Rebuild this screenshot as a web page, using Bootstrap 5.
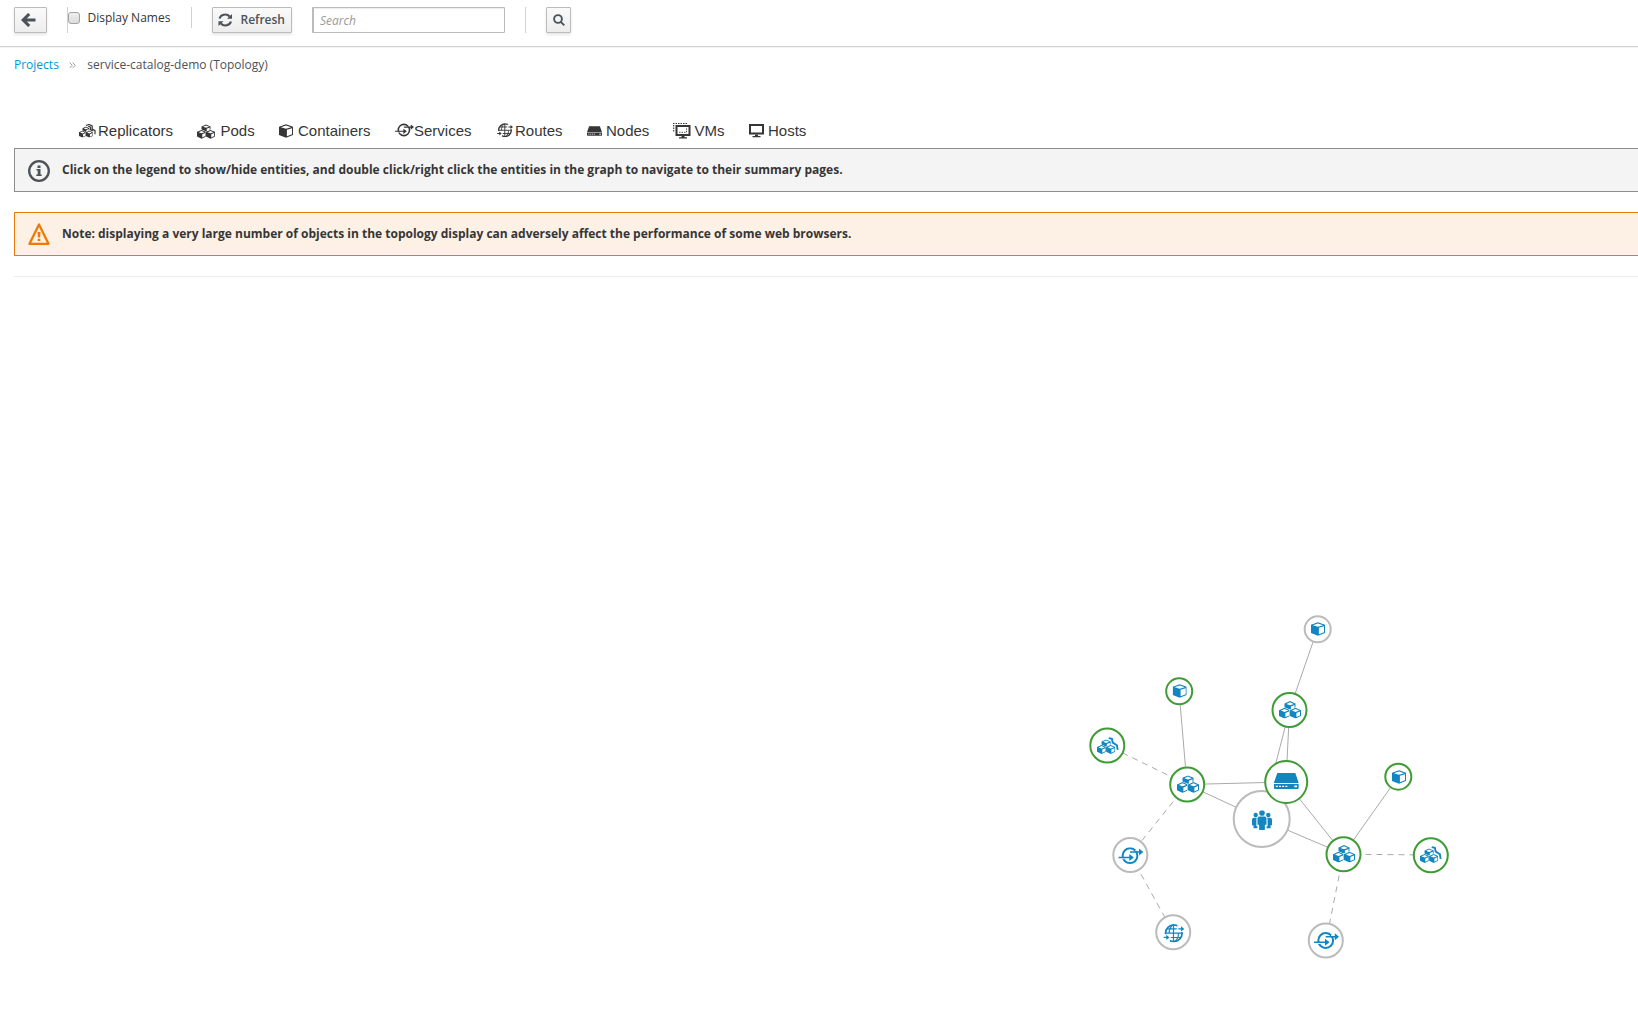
<!DOCTYPE html>
<html lang="en">
<head>
<meta charset="utf-8">
<meta name="viewport" content="width=device-width, initial-scale=1">
<title>service-catalog-demo (Topology)</title>
<link href="https://cdn.jsdelivr.net/npm/bootstrap@5.3.0/dist/css/bootstrap.min.css" rel="stylesheet">
<style>
body{font-family:"Open Sans",sans-serif;font-size:12px;line-height:20px;color:#363636;background:#fff;height:1035px;overflow:hidden}
.toolbar-pf{height:47px;padding:7px 0 0 14px;border-bottom:1px solid #d1d1d1;box-shadow:0 1px 0 #f5f5f5}
.btn-pf{height:26px;padding:0;font:600 12px/24px "Open Sans",sans-serif;color:#4d5258;background:linear-gradient(#fafafa,#ededed);border:1px solid #bbb;border-radius:1px;box-shadow:0 2px 3px rgba(3,3,3,.1);display:flex;align-items:center}
.btn-back{width:33px;padding-left:6px;margin-right:20px}
.btn-refresh{width:80px;padding-left:5px;margin-right:20px}
.btn-find{width:25px;justify-content:center}
.names-group{height:26px;width:124px;border-left:1px solid #d1d1d1}
.names-group .form-check-input{width:12px;height:12px;margin:5px 8px 0 0;border:1px solid #a2a2a2;border-radius:3px;background:linear-gradient(#eee,#ddd);flex:none}
.names-group label{padding-top:1px;margin-left:-.5px}
.rule-short{width:1px;height:21px;background:#d1d1d1;margin-right:20px}
.rule-tall{width:1px;height:26px;background:#d1d1d1;margin:0 20px}
.find-input{width:193px;height:26px;min-height:0;padding:0 7px 0 6px;font:12px/24px "Open Sans",sans-serif;border:1px solid #bbb;border-left-width:2px;border-radius:1px;box-shadow:inset 0 1px 1px rgba(3,3,3,.075)}
.find-input::placeholder{font-style:italic;color:#999}
.crumbs{padding:8px 0 0 14px;height:40px;color:#4d5258}
.crumbs a{color:#0099d3;text-decoration:none}
.crumbs svg{margin:0 11.5px 0 10px}
.main-pf{padding-left:14px}
.legend-pf{height:61px;padding:34px 0 0 65px;font:15px/20px "Liberation Sans",Arial,sans-serif;color:#363636}
.legend-pf li{display:flex;align-items:center;white-space:nowrap;flex:none;height:20px}
.legend-pf svg{flex:none}
.w-repl{width:118px}.w-pods{width:82px}.w-cont{width:116px}.w-serv{width:102px}.w-rout{width:90px}.w-node{width:86px}.w-vms{width:76px}
.notice{height:44px;margin:0 0 20px;padding:0 0 0 13px;border:1px solid #8b8d8f;border-right:0;border-radius:1px 0 0 1px;background:#f4f4f4;color:#363636}
.notice strong{font-weight:700;margin:-1px 0 0 12px}
.notice-warn{border-color:#ec7a08;background:#fdf0e5}
.split{height:1px;background:#ededed}
.topo{display:block;margin-left:-14px}
</style>
<script src="https://cdn.jsdelivr.net/npm/bootstrap@5.3.0/dist/js/bootstrap.bundle.min.js"></script>
</head>
<body>
<svg width="0" height="0" class="position-absolute" aria-hidden="true">
<symbol id="cube" viewBox="0 0 14 14"><path fill="#fff" d="M1 3 7 1l6 2v8l-6 2z"/><path fill="currentColor" fill-rule="evenodd" d="M0 2.8 7 .3 14 2.8V11L7 13.8 0 11zM1.900 3.200 7 4.800l5.100-1.600L7 1.400zM7.900 5.800 13 4.200v6.100l-5.100 2z"/></symbol>
<symbol id="block" viewBox="-1 -1 13 13"><path fill="#fff" stroke="#fff" stroke-width="1.200" d="M0 2.600 5.400.2 11 2.600v5.800L5.600 11 0 8.400z"/><path fill="currentColor" fill-rule="evenodd" d="M0 2.600 5.500.2 11 2.600v5.800L5.600 11 0 8.400zM1.900 3l3.600 1.400L9.300 3 5.500 1.400zM6.400 5.500v4L10 7.800V4z"/></symbol>
<symbol id="pods" viewBox="0 0 22 17.5"><use href="#block" x="4.500" y="-1.100" width="13" height="13"/><use href="#block" x="-1" y="5.600" width="13" height="13"/><use href="#block" x="10" y="5.600" width="13" height="13"/></symbol>
<symbol id="repl" viewBox="0 0 22 17.5"><use href="#pods" x="0" y="2.200" width="18.200" height="15"/><path fill="none" stroke="currentColor" stroke-width="1.900" d="M11.700 1.100l3.200.8.8 3.700 4.200 2.700.8 4.600"/></symbol>
<symbol id="repl-small" viewBox="0 0 17 14"><use href="#pods" x="0" y="2.300" width="13.800" height="11.500"/><path fill="none" stroke="currentColor" stroke-width="1.200" d="M7 1.500l3-1 3.200 1.400v3l2.800 1.800v3.600M9.200 2.300l2.300.8v2.500l2.500 1.500"/></symbol>
<symbol id="serv" viewBox="0 0 25 17"><circle cx="11.700" cy="8.500" r="7.400" fill="none" stroke="currentColor" stroke-width="2"/><path stroke="#fff" stroke-width="1" d="M17 3.400h4M1 11.500h5"/><path fill="none" stroke="currentColor" stroke-width="1.500" d="M0 10.200h12M11.700 4.700H22"/><path fill="currentColor" d="M11 6.700l4.600 3.500-4.600 3.600zM20.800 1.200l4.200 3.500-4.200 3.500z"/></symbol>
<symbol id="route" viewBox="0 0 21 19"><g fill="none" stroke="currentColor" stroke-width="1.200"><circle cx="10.500" cy="9.500" r="8.300" stroke-width="1.700"/><path d="M10.200 1v17M2 9.500h17M3.500 5.200h10M7.500 13.800h9.500M9.500 1.300C6.500 3.500 5.800 7 5.900 9.500M11.500 17.700c3-2.200 3.700-5.700 3.600-8.200" /></g><path fill="#fff" d="M14 1.500h7v6.800h-7zM0 10.600h6.600V18H0z"/><path fill="none" stroke="currentColor" stroke-width="1.400" d="M15 5.200h4M.3 13.700h4"/><path fill="currentColor" d="M17.700 2.600l3.300 2.600-3.300 2.600zM3 11.100l3.200 2.600L3 16.300z"/></symbol>
<symbol id="server" viewBox="0 0 25 16"><path fill="currentColor" fill-rule="evenodd" d="M3.500 0h18L25 10H0zM0 11h25v4.200l-.8.8H.8l-.8-.8zM2 12.700V14h2v-1.300zM5.200 12.700V14h2v-1.300zM8.400 12.700V14h2v-1.300zM11.600 12.700V14h2v-1.300zM20.500 12.500v1.700h2.700v-1.700z"/></symbol>
<symbol id="people" viewBox="0 0 20 20"><g fill="currentColor"><circle cx="10" cy="2.700" r="2.800"/><circle cx="3.700" cy="4.700" r="2.200"/><circle cx="16.300" cy="4.700" r="2.200"/><path d="M7.500 6.300h5q2 0 2 2v6.200h-1.600V19q0 .7-.8.700H7.900q-.8 0-.8-.7v-4.500H5.500V8.300q0-2 2-2zM2 7.500h2.800q-.4 1-.4 2.500v6h1V18H1.500v-3H0V9.500q0-2 2-2zM18 7.500h-2.800q.4 1 .4 2.500v6h-1V18h4v-3H20V9.500q0-2-2-2z"/></g></symbol>
</svg>

<header class="toolbar-pf d-flex align-items-start">
<button class="btn-pf btn-back" type="button" aria-label="Back"><svg width="16" height="14" viewBox="0 0 16 14"><path d="M2 7h12.500M8.200 1 2.200 7l6 6" fill="none" stroke="#4d5258" stroke-width="3.100"/></svg></button>
<div class="names-group d-flex align-items-start"><input class="form-check-input" type="checkbox" id="names"><label for="names">Display Names</label></div>
<div class="rule-short"></div>
<button class="btn-pf btn-refresh" type="button"><svg class="me-2" width="14.500" height="14" viewBox="0 0 15 14"><g fill="none" stroke="#4d5258" stroke-width="2.200"><path d="M1.600 5.500A6 5.400 0 0 1 12 3.300M13.400 8.500A6 5.400 0 0 1 3 10.700"/></g><path fill="#4d5258" d="M14.500.7v5.100H9.300zM.5 13.300V8.200h5.200z"/></svg>Refresh</button>
<input class="form-control find-input" type="text" placeholder="Search" aria-label="Search">
<div class="rule-tall"></div>
<button class="btn-pf btn-find" type="button" aria-label="Find"><svg width="12" height="12" viewBox="0 0 12 12"><g fill="none" stroke="#4d5258" stroke-width="1.900"><circle cx="5" cy="5" r="3.900"/><path d="M7.800 7.800l3.500 3.500"/></g></svg></button>
</header>

<nav class="crumbs d-flex align-items-start"><a href="#">Projects</a><svg width="7" height="20" viewBox="0 0 7 20"><path d="M.7 7.500l2.500 2.800-2.500 2.800M3.700 7.500l2.500 2.800-2.500 2.800" fill="none" stroke="#9c9c9c"/></svg><span>service-catalog-demo (Topology)</span></nav>

<main class="main-pf">
<ul class="legend-pf list-unstyled d-flex m-0">
<li class="w-repl"><svg width="19" height="14"><use href="#repl-small" width="17" height="14"/></svg>Replicators</li>
<li class="w-pods"><svg width="23.500" height="15"><use href="#pods" width="18" height="15"/></svg>Pods</li>
<li class="w-cont"><svg width="19" height="14"><use href="#cube" width="14" height="14"/></svg>Containers</li>
<li class="w-serv"><svg width="19" height="16"><use href="#serv" width="19" height="14"/></svg>Services</li>
<li class="w-rout"><svg width="18" height="16"><use href="#route" width="16" height="14.500"/></svg>Routes</li>
<li class="w-node"><svg width="19" height="12"><use href="#server" width="15" height="12"/></svg>Nodes</li>
<li class="w-vms"><svg width="21.500" height="20"><path d="M0 2.500h14M.7 4v7" fill="none" stroke="#363636" stroke-width="1.100" stroke-dasharray="1.500 1"/><path fill="none" stroke="#363636" stroke-width="2" d="M3.500 5h13v9h-13z"/><path fill="none" stroke="#363636" stroke-dasharray="1.500 1" stroke-width=".8" d="M6 11.300h7.500v-4"/><path fill="#363636" d="M8.500 15h3v1.200H14v1.200H6v-1.200h2.500z"/></svg>VMs</li>
<li><svg width="19" height="20"><path fill="none" stroke="#363636" stroke-width="2" d="M1 4h13v8.500H1z"/><path fill="#363636" d="M6 13.500h3V15h2.500v1.200h-8V15H6z"/></svg>Hosts</li>
</ul>
<div class="notice d-flex align-items-center"><svg width="22" height="23"><circle cx="11" cy="12" r="9.800" fill="none" stroke="#4d5258" stroke-width="2.300"/><path fill="#4d5258" d="M9.500 6.500h3V9h-3zM8.500 10h4v5.500h1.200V17H8.300v-1.500h1.400v-4H8.500z"/></svg><strong>Click on the legend to show/hide entities, and double click/right click the entities in the graph to navigate to their summary pages.</strong></div>
<div class="notice notice-warn d-flex align-items-center"><svg width="22" height="22"><path d="M11 1.500 1.500 20.800h19z" fill="none" stroke="#ec7a08" stroke-width="2.300" stroke-linejoin="round"/><path fill="#ec7a08" d="M9.500 9h3l-.4 5.500H9.900zM9.700 15.700h2.600V18H9.700z"/></svg><strong>Note: displaying a very large number of objects in the topology display can adversely affect the performance of some web browsers.</strong></div>
<div class="split"></div>
<svg class="topo" width="1638" height="758" viewBox="0 277 1638 758" color="#1186c1">
<g stroke="#aaa" fill="none">
<path d="M1317.500 629 1289.500 710 1286 782M1289.500 710 1261.500 819M1179 691l8 93.500 99-2.500M1187 784.500l74.500 34.500 82 35M1286 782l57.500 72 54.500-77"/>
<path stroke-dasharray="6 5" d="M1187 784.500 1107.500 745.500M1187 784.500 1130.300 855M1130.300 855l42.700 77M1343.500 854.200l87.500.8M1343.500 854 1326 941"/>
</g>
<g fill="#fff" stroke="#bbb" stroke-width="2">
<circle cx="1317.700" cy="629.300" r="13"/><circle cx="1261.700" cy="819" r="28"/><circle cx="1130.300" cy="855" r="17"/><circle cx="1173.200" cy="932.300" r="17"/><circle cx="1325.800" cy="940.500" r="17"/>
<g stroke="#3f9c35"><circle cx="1289.500" cy="710" r="17"/><circle cx="1286.200" cy="782" r="21"/><circle cx="1179.200" cy="691.300" r="13"/><circle cx="1107.300" cy="745.500" r="17"/><circle cx="1187.200" cy="784.500" r="17"/><circle cx="1398.300" cy="776.700" r="13"/><circle cx="1343.500" cy="854.200" r="17"/><circle cx="1430.800" cy="855.200" r="17"/></g>
</g>
<use href="#cube" x="1311" y="622" width="14" height="14"/><use href="#cube" x="1172.700" y="684" width="14" height="14"/><use href="#cube" x="1392" y="770" width="14" height="14"/>
<use href="#pods" x="1279" y="701" width="22" height="17.500"/><use href="#pods" x="1177" y="775.300" width="22" height="17.500"/><use href="#pods" x="1333" y="845" width="22" height="17.500"/>
<use href="#repl" x="1097" y="737" width="22" height="17.500"/><use href="#repl" x="1420" y="846" width="22" height="17.500"/>
<use href="#serv" x="1118.300" y="847.200" width="25" height="17"/><use href="#serv" x="1314" y="932" width="25" height="17"/>
<use href="#route" x="1163.300" y="923.700" width="21" height="19"/><use href="#server" x="1273.800" y="773" width="25" height="16"/><use href="#people" x="1252" y="810.300" width="20" height="20"/>
</svg>
</main>
</body>
</html>
